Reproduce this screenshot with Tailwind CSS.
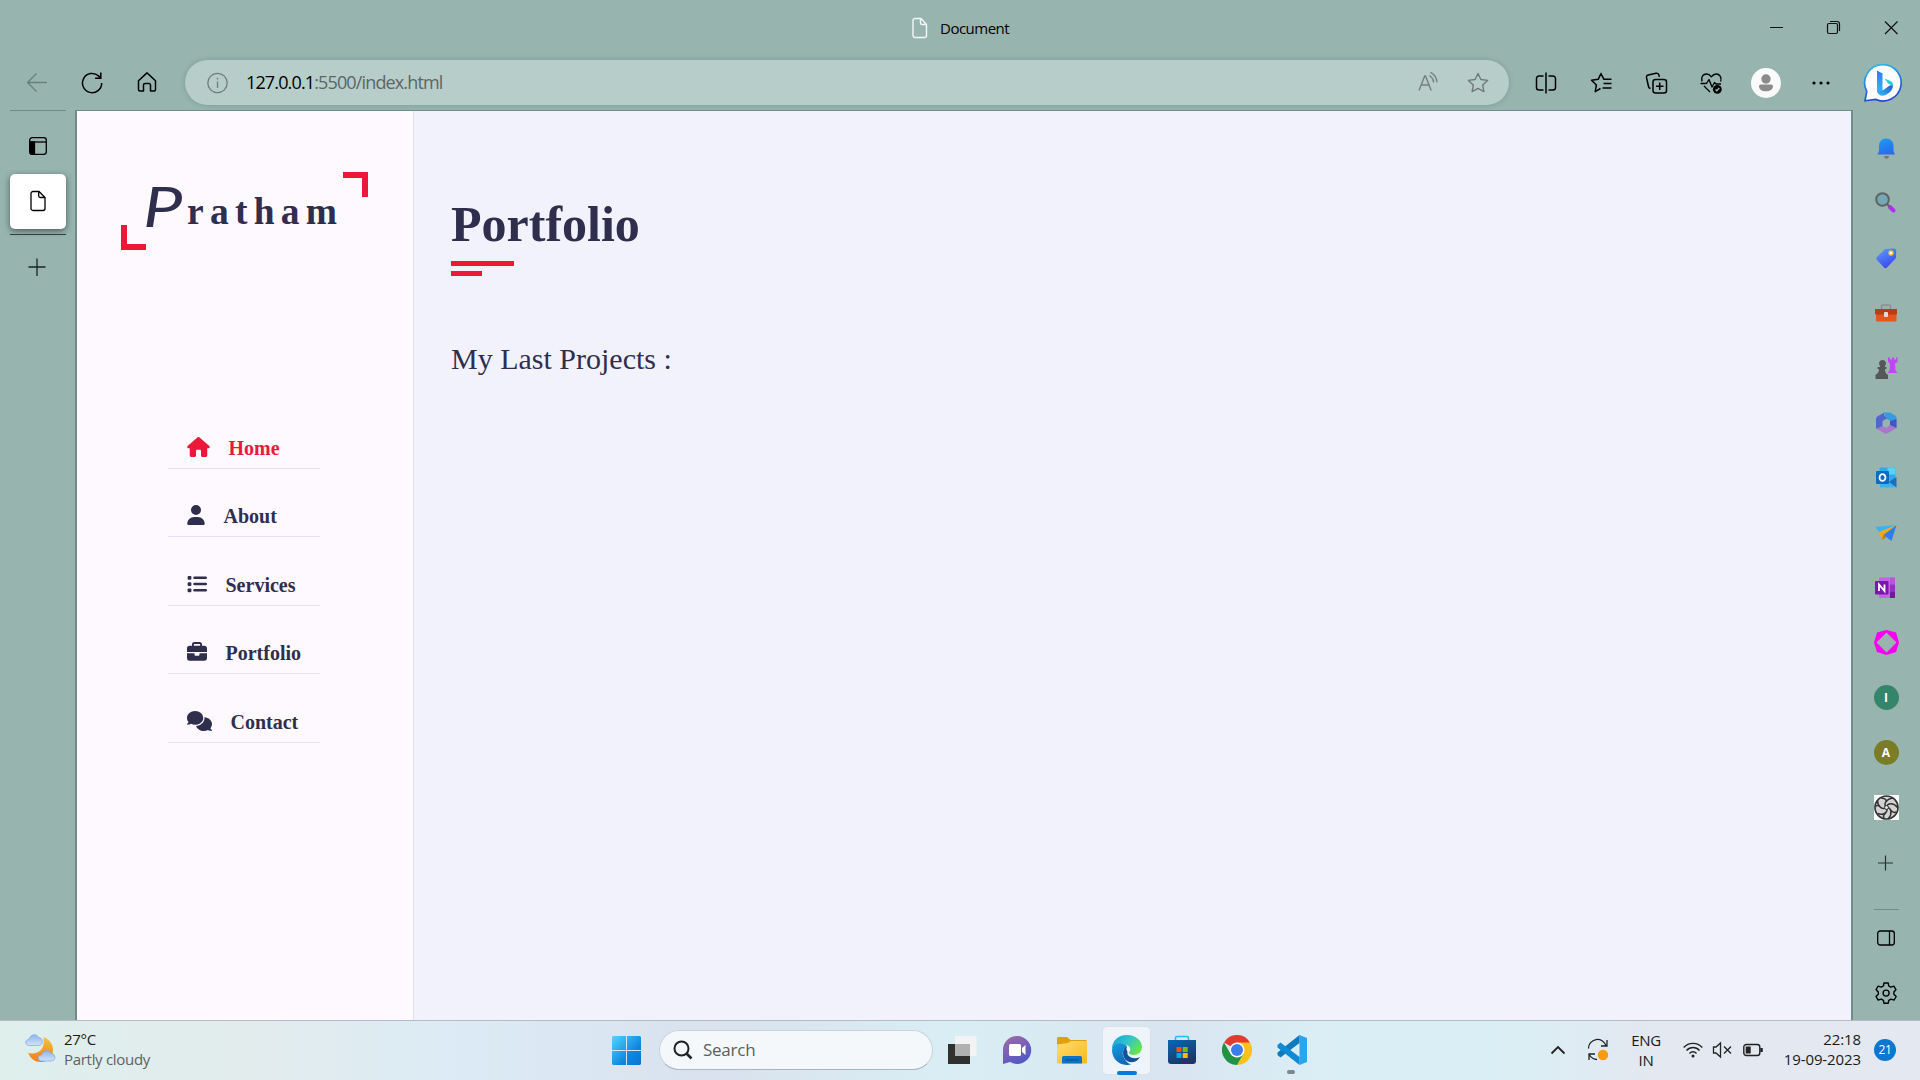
<!DOCTYPE html>
<html lang="en">
<head>
<meta charset="utf-8">
<title>Document</title>
<script src="https://cdn.jsdelivr.net/npm/@tailwindcss/browser@4"></script>
</head>
<body class="w-[1920px] h-[1080px] overflow-hidden flex flex-col bg-[#97b4af] font-['Open_Sans',sans-serif] text-black">

<!-- Title bar -->
<header class="h-[60px] shrink-0 flex items-start">
  <div class="w-[912px] shrink-0"></div>
  <div class="flex items-center w-[834px] h-[56px] shrink-0 pb-1">
    <svg class="w-[16px] h-[22px] mt-1" viewBox="0 0 16 22" fill="none" stroke="#f3f7f6" stroke-width="1.4"><path d="M3 1.500h6l5.500 6V18.500a2 2 0 0 1-2 2H3a2 2 0 0 1-2-2V3.500a2 2 0 0 1 2-2zM8.500 1.500v4.500a1.500 1.500 0 0 0 1.500 1.500h4.500"/></svg>
    <span class="ml-[12px] mt-[4px] text-[15px] leading-5 tracking-[-0.5px]">Document</span>
  </div>
  <svg class="w-[174px] h-[56px]" viewBox="1746 0 174 56" fill="none" stroke="#111" stroke-width="1.2"><path d="M1770 27.500h13M1885 21.500l12.500 12.500M1897.500 21.500l-12.500 12.500"/><rect x="1827.500" y="23.500" width="10" height="10" rx="1.500"/><path d="M1830 21.500h7a2.500 2.500 0 0 1 2.500 2.500v7"/></svg>
</header>

<!-- Toolbar -->
<nav class="h-[45px] shrink-0 flex items-center pl-[9px]">
  <div class="w-[55px] grid place-items-center"><svg class="w-6 h-6" viewBox="0 0 24 24" fill="none" stroke="#6a7f7b" stroke-width="1.300"><path d="M22 11.500H2.500M11.500 2.500l-9 9 9 9"/></svg></div>
  <div class="w-[55px] grid place-items-center"><svg class="w-6 h-6" viewBox="0 0 24 24" fill="none" stroke="#000" stroke-width="1.500"><path d="M21.700 12A9.600 9.600 0 1 1 18.500 4.900l2 2M20.800 1.500v5.700h-5.700"/></svg></div>
  <div class="w-[55px] grid place-items-center"><svg class="w-6 h-6" viewBox="0 0 24 24" fill="none" stroke="#000" stroke-width="1.500" stroke-linejoin="round"><path d="M3.500 9.700 12 1.900l8.500 7.800v8.800a1.500 1.500 0 0 1-1.500 1.500h-3.500V14a1.500 1.500 0 0 0-1.500-1.500h-4a1.500 1.500 0 0 0-1.500 1.500v6H5a1.500 1.500 0 0 1-1.500-1.500z"/></svg></div>
  <div class="ml-[11px] w-[1324px] h-[45px] rounded-full bg-[#b7cdc9] shadow-[0_0_5px_rgba(60,90,85,0.3)] flex items-center">
    <svg class="ml-[20px] w-6 h-6" viewBox="0 0 24 24" fill="none" stroke="#707d7b" stroke-width="1.300"><circle cx="12.500" cy="12" r="9.700"/><path d="M12.500 10.500v6.500"/><circle cx="12.500" cy="7.700" r=".6" fill="#707d7b" stroke-width=".5"/></svg>
    <span class="ml-[17px] text-[18px] tracking-[-0.86px] text-[#5c6664] whitespace-nowrap"><span class="text-black">127.0.0.1</span>:5500/index.html</span>
    <svg class="ml-auto w-6 h-6" viewBox="0 0 24 24" fill="none" stroke="#757f7d" stroke-width="1.400"><path d="M3 19.500 8.700 5h.8l5.700 14.500M5.300 14h7.600M13.500 4.500c2.200 1.500 3.800 3.700 4.200 6.800M14.500 1.300c3.800 1.800 6 5 6.500 10"/></svg>
    <svg class="ml-[26px] mr-[19px] w-6 h-6" viewBox="0 0 24 24" fill="none" stroke="#6f7a78" stroke-width="1.400" stroke-linejoin="round"><path d="m12 2.500 2.900 6 6.700.9-4.900 4.600 1.200 6.600-5.900-3.200-5.900 3.200 1.200-6.600L2.400 9.400l6.700-.9z"/></svg>
  </div>
  <div class="ml-[9px] flex">
    <div class="w-[55px] grid place-items-center"><svg class="w-6 h-6" viewBox="0 0 24 24" fill="none" stroke="#000" stroke-width="1.500"><path d="M12 1.500v21M9.500 5H5a2.500 2.500 0 0 0-2.500 2.500v9A2.500 2.500 0 0 0 5 19h4.500M14.500 5H19a2.500 2.500 0 0 1 2.500 2.500v9A2.500 2.500 0 0 1 19 19h-4.500"/></svg></div>
    <div class="w-[55px] grid place-items-center"><svg class="w-6 h-6" viewBox="0 0 24 24" fill="none" stroke="#000" stroke-width="1.500" stroke-linejoin="round"><path d="M11.500 17.500 6.200 20.700 7.400 14 2.500 9.300l6.700-1L12 2.500l2.900 5.800h7.600M14.500 12.500h8M13.500 17h9"/></svg></div>
    <div class="w-[55px] grid place-items-center"><svg class="w-6 h-6" viewBox="0 0 24 24" fill="none" stroke="#000" stroke-width="1.500"><rect x="9" y="8.500" width="13.500" height="13.500" rx="2.500"/><path d="M15.700 11.500v7.500M12 15.200h7.500M6.500 17.500a2.500 2.500 0 0 1-2-2L2.500 6.500a2 2 0 0 1 1.700-2.400L12 2.300a2.500 2.500 0 0 1 3 2l.3 1.500"/></svg></div>
    <div class="w-[55px] grid place-items-center"><svg class="w-6 h-6" viewBox="0 0 24 24" fill="none" stroke="#000" stroke-width="1.400" stroke-linejoin="round"><path d="M3 10.500C1.500 5.500 4.500 3 7.500 3c2 0 3.700 1.200 4.800 2.800C13.500 4.200 15.200 3 17.200 3c3.300 0 5.800 3 4.500 7.500M1.500 12.500h6l2.500-4 3 7.500 2.500-4.500 1.500 1.500h5M5 15l6 6"/><circle cx="18.300" cy="18.300" r="4.400" fill="#000" stroke="none"/><path d="m16.500 18.500 1.300 1.300 2.500-2.700" stroke="#97b4af"/></svg></div>
    <div class="w-[55px] grid place-items-center"><svg class="w-[30px] h-[30px]" viewBox="0 0 30 30"><circle cx="15" cy="15" r="15" fill="#fafafa"/><g fill="#8b8b8b"><circle cx="15" cy="11" r="4.700"/><path d="M9.800 16.500h10.400a1.800 1.800 0 0 1 1.800 1.800c0 3-3 5-7 5s-7-2-7-5a1.800 1.800 0 0 1 1.800-1.800z"/></g></svg></div>
    <div class="w-[55px] grid place-items-center"><svg class="w-6 h-6" viewBox="0 0 24 24"><circle cx="5" cy="12" r="1.600"/><circle cx="12" cy="12" r="1.600"/><circle cx="19" cy="12" r="1.600"/></svg></div>
  </div>
  <svg class="ml-[14px] w-[42px] h-[42px]" viewBox="0 0 42 42"><defs><linearGradient id="bg1" x1="0" y1="0" x2=".3" y2="1"><stop offset="0" stop-color="#27c4f0"/><stop offset="1" stop-color="#2148d8"/></linearGradient><linearGradient id="bg2" x1="0" y1="0" x2="0" y2="1"><stop offset="0" stop-color="#2a7cf5"/><stop offset="1" stop-color="#35bdf8"/></linearGradient><linearGradient id="bg3" x1="0" y1="1" x2="1" y2="0"><stop offset="0" stop-color="#34c1ef"/><stop offset="1" stop-color="#2454dc"/></linearGradient></defs><path d="M21 2.600a18.200 18.200 0 1 1-7.500 34.800L3 38.800l1.800-9.500A18.200 18.200 0 0 1 21 2.600z" fill="#fff" stroke="url(#bg1)" stroke-width="1.700"/><path d="m15 8.500 5.500 3v18.500L17 32.500l-2-2.500z" fill="url(#bg2)"/><path d="m15.500 30 6-2 6-4.500 3.500-.5c0 4-2 6.500-5 8.500-4.500 3-8.500 3.500-10.500-1.500z" fill="url(#bg3)"/><path d="m22.500 16.500 6 2.500c2 1 2.800 2.500 2.500 5l-5-2.500z" fill="#27cddc"/></svg>
</nav>

<!-- Browser body -->
<div class="h-[915px] shrink-0 flex">
  <!-- Vertical tabs -->
  <aside class="w-[75px] pt-[5px] pl-[10px] shrink-0">
    <div class="w-[56px] h-px bg-[#728d88]"></div>
    <div class="w-[56px] h-[63px] pt-[6px] pr-[1px] grid place-items-center"><svg class="w-[18px] h-[18px]" viewBox="0 0 18 18" fill="none" stroke="#000" stroke-width="1.300"><rect x=".7" y=".7" width="16.600" height="16.600" rx="2.500"/><path d="M1 5h16" /><path d="M1 5h4.500v12.300H3A2 2 0 0 1 1 15z" fill="#000"/></svg></div>
    <div class="w-[56px] h-[55px] rounded-[5px] bg-white shadow-[0_2px_6px_rgba(0,0,0,0.5)] grid place-items-center pb-[1px]"><svg class="w-[16px] h-[22px]" viewBox="0 0 16 22" fill="none" stroke="#000" stroke-width="1.300"><path d="M3 1.500h6l6 6V18.500a2 2 0 0 1-2 2H3a2 2 0 0 1-2-2V3.500a2 2 0 0 1 2-2zM8.700 1.500V6a1.500 1.500 0 0 0 1.500 1.500H15"/></svg></div>
    <div class="mt-[5px] w-[56px] h-px bg-[#33413e]"></div>
    <svg class="mt-[22px] ml-[17px] w-[20px] h-[20px]" viewBox="0 0 20 20" stroke="#1b2422" stroke-width="1.300"><path d="M10 1.500v17.500M1.500 10h17"/></svg>
  </aside>

  <!-- Page -->
  <div class="mt-[5px] w-[1778px] shrink-0 border-t border-l-2 border-r-2 border-[#728d88] flex">
    <aside class="w-[337px] shrink-0 bg-[#fdf9ff] border-r border-[#e0dff3] flex flex-col">
      <div class="relative ml-[44px] mt-[61px] w-[247px] h-[78px]">
        <div class="absolute right-0 top-0 w-[25px] h-[25px] border-t-6 border-r-6 border-[#ec1839]"></div>
        <div class="absolute left-0 bottom-0 w-[25px] h-[25px] border-b-6 border-l-6 border-[#ec1839]"></div>
        <a class="absolute left-[22px] top-[3px] whitespace-nowrap leading-[56px] font-bold text-[#302e4d] text-[37.5px] tracking-[6.25px] font-['Liberation_Serif',serif]"><span class="inline-block w-[44px] origin-left translate-y-[3px] scale-x-125 font-['Lato',cursive] font-normal italic text-[56px] tracking-normal">P</span>ratham</a>
      </div>
      <ul class="ml-[91px] mt-[150px] w-[152px] font-['Liberation_Serif',serif] font-bold text-[20px] text-[#302e4d]">
        <li class="h-[68.500px] border-b border-[#e8dfff] flex items-center pt-[26px] pl-[18.500px] text-[#ec1839]"><svg class="w-[23px] h-5" viewBox="0 0 576 512" fill="currentColor"><path d="M575.800 255.500c0 18-15 32.100-32 32.100h-32l.7 160.200c0 2.700-.2 5.400-.5 8.100V472c0 22.100-17.900 40-40 40H392c-22.100 0-40-17.900-40-40V360c0-17.700-14.300-32-32-32h-64c-17.700 0-32 14.300-32 32v112c0 22.100-17.900 40-40 40h-80c-22.100 0-40-17.900-40-40V287.600H32c-18 0-32-14-32-32.100 0-9 3-17 10-24L266.400 8c7-7 15-8 22-8s15 2 21 7l255.400 224.500c8 7 12 15 11 24z"/></svg><span class="ml-[19px] mt-[2px]">Home</span></li>
        <li class="h-[68.500px] border-b border-[#e8dfff] flex items-center pt-[26px] pl-[18.500px]"><svg class="w-[18px] h-5" viewBox="0 0 448 512" fill="currentColor"><path d="M224 256a128 128 0 1 0 0-256 128 128 0 1 0 0 256zm-45.700 48C79.800 304 0 383.800 0 482.300 0 498.700 13.300 512 29.700 512h388.600c16.400 0 29.700-13.300 29.700-29.700C448 383.800 368.200 304 269.700 304z"/></svg><span class="ml-[19px] mt-[2px]">About</span></li>
        <li class="h-[68.500px] border-b border-[#e8dfff] flex items-center pt-[26px] pl-[18.500px]"><svg class="w-5 h-5" viewBox="0 0 512 512" fill="currentColor"><rect x="16" y="48" width="96" height="96" rx="24"/><rect x="16" y="208" width="96" height="96" rx="24"/><rect x="16" y="368" width="96" height="96" rx="24"/><rect x="160" y="64" width="352" height="64" rx="32"/><rect x="160" y="224" width="352" height="64" rx="32"/><rect x="160" y="384" width="352" height="64" rx="32"/></svg><span class="ml-[19px] mt-[2px]">Services</span></li>
        <li class="h-[68.500px] border-b border-[#e8dfff] flex items-center pt-[26px] pl-[18.500px]"><svg class="w-5 h-5" viewBox="0 0 512 512" fill="currentColor"><path d="M184 48h144c4.400 0 8 3.600 8 8v40H176V56c0-4.400 3.600-8 8-8zm-56 8v40H64c-35.300 0-64 28.700-64 64v96h512v-96c0-35.300-28.700-64-64-64h-64V56c0-30.900-25.100-56-56-56H184c-30.900 0-56 25.100-56 56zm384 232H320v32c0 17.700-14.300 32-32 32h-64c-17.700 0-32-14.300-32-32v-32H0v128c0 35.300 28.700 64 64 64h384c35.300 0 64-28.700 64-64z"/></svg><span class="ml-[19px] mt-[2px]">Portfolio</span></li>
        <li class="h-[68.500px] border-b border-[#e8dfff] flex items-center pt-[26px] pl-[18.500px]"><svg class="w-[25px] h-5" viewBox="0 0 640 512" fill="currentColor"><path d="M208 352c114.900 0 208-78.800 208-176S322.900 0 208 0 0 78.800 0 176c0 38.600 14.700 74.300 39.600 103.400-3.500 9.400-8.700 17.700-14.200 24.700-4.800 6.200-9.700 11-13.300 14.300C5 323-2 330 0 340c3 8 9 12 16 12 21.900 0 43.800-5.600 62.100-12.500 9.200-3.500 17.800-7.400 25.300-11.400C134.100 343.300 169.800 352 208 352zM448 176c0 112.300-99.100 196.900-216.500 207C255.800 457.400 336.400 512 432 512c38.200 0 73.900-8.700 104.700-23.900 7.500 4 16 7.900 25.200 11.400 18.300 6.900 40.300 12.500 62.100 12.500 7 0 13-4 16-12 2-9-6-16-12.200-21.700-3.600-3.400-8.500-8.200-13.300-14.300-5.400-7-10.700-15.400-14.200-24.700 25-29 39.600-64.700 39.600-103.400 0-92.800-84.900-168.900-192.600-175.500.4 5.100.6 10.300.6 15.500z"/></svg><span class="ml-[19px] mt-[2px]">Contact</span></li>
      </ul>
    </aside>
    <main class="flex-1 bg-[#f2f2fc] pl-[37px] font-['Liberation_Serif',serif] text-[#302e4d]">
      <h1 class="mt-[84px] text-[50px] leading-[58px] font-bold">Portfolio</h1>
      <div class="mt-[8px] w-[63px] h-[5px] bg-[#ec1839]"></div>
      <div class="mt-[5px] w-[31px] h-[5px] bg-[#ec1839]"></div>
      <h2 class="mt-[65px] text-[30px] leading-[36px]">My Last Projects :</h2>
    </main>
  </div>

  <!-- Edge sidebar -->
  <aside class="w-[67px] pr-[1px] pt-[15px] flex flex-col items-center">
    <div class="h-[55px] grid place-items-center"><svg class="w-6 h-6" viewBox="0 0 24 24"><defs><linearGradient id="s1" x1="0" y1="0" x2=".4" y2="1"><stop offset="0" stop-color="#1a9ff0"/><stop offset="1" stop-color="#2a6cf0"/></linearGradient></defs><path d="M10 20h5l-1 2.500h-3z" fill="#777"/><path d="M12 2.500c4.500 0 7.500 3 7.500 7.500v5l1.500 3.500H3.500L5 15v-5c0-4.500 3-7.500 7-7.500z" fill="url(#s1)"/></svg></div>
    <div class="h-[55px] grid place-items-center"><svg class="w-6 h-6" viewBox="0 0 24 24"><path d="m16 16 3.500 3.500" stroke="#b22df2" stroke-width="4" stroke-linecap="round"/><path d="m13 13 2.500 2.500" stroke="#5f6262" stroke-width="2"/><circle cx="8.500" cy="8.500" r="6.300" fill="#73a8b4" stroke="#5f6262" stroke-width="2"/></svg></div>
    <div class="h-[55px] grid place-items-center"><svg class="w-6 h-6" viewBox="0 0 24 24"><defs><linearGradient id="s2" x1="0" y1="0" x2=".5" y2="1"><stop offset="0" stop-color="#5ba1fb"/><stop offset="1" stop-color="#3d49ee"/></linearGradient></defs><path d="m11 3 9-.5c1.500 0 2.200.8 2.200 2L22 12 13 21.500c-1 1-2 1-3 0l-7-7.500c-1-1-1-2 0-3z" fill="url(#s2)"/><circle cx="17" cy="7" r="2" fill="#fff" stroke="#f8ca28" stroke-width="1.300"/></svg></div>
    <div class="h-[55px] grid place-items-center"><svg class="w-6 h-6" viewBox="0 0 24 24"><path d="M7.500 8V5.500c0-1 .5-1.500 1.500-1.500h6c1 0 1.500.5 1.500 1.500V8" fill="none" stroke="#8b8d8c" stroke-width="1.500"/><rect x="2" y="8" width="20.500" height="12.500" rx="1.200" fill="#e3571f"/><path d="M1 8h22v4.500a1 1 0 0 1-1 1H2a1 1 0 0 1-1-1z" fill="#bd3d12"/><rect x="10" y="11" width="4" height="5" rx="1" fill="#e0dedc"/></svg></div>
    <div class="h-[55px] grid place-items-center"><svg class="w-6 h-6" viewBox="0 0 24 24"><path d="M14 1.500h2v2h2v-2h2v2h2v-2h1.500V6L21 7.500l.5 7 2 2.500H13.500l2-2.500.5-7L14 6z" fill="#bd48f0"/><path d="M8.500 4a3.500 3.500 0 0 1 2.500 6v1h1.500v2H11c0 3 .5 4.500 3 6v4H1.500v-4c2.500-1.500 3.500-3 3.500-6H3.500v-2H6V10a3.500 3.500 0 0 1 2.500-6z" fill="#555857"/></svg></div>
    <div class="h-[55px] grid place-items-center"><svg class="w-6 h-6" viewBox="0 0 24 24"><path d="M10 1.500h6l5 3c1 .7 1.500 1.500 1.500 3V16L16 12.500V9.800L12 7.500z" fill="#379be0"/><path d="M10.500 1.500 4 5c-1.500 1-2 2-2 3.500V16c0 1 .5 2 1.500 2.500L8.500 17V10l4.500-2.500L10 4z" fill="#5065cd"/><path d="M2.500 17.500 8.500 15l4 2 4-3.500 6 1.500c0 1.500-.5 2.200-1.500 3l-7 4c-1.500 1-2.500 1-4 0z" fill="#a977cb"/><path d="M16 10v4l6.500 3V8z" fill="#4456c5"/></svg></div>
    <div class="h-[55px] grid place-items-center"><svg class="w-6 h-6" viewBox="0 0 24 24"><rect x="5.500" y="1.500" width="16" height="13" rx="1" fill="#2fa8ec"/><path d="M13.500 1.500h8v7h-8z" fill="#55d3fb"/><path d="m22.500 11-8 5 8 5.500z" fill="#1670c4"/><path d="M6 13.500 14.500 16l7.500 5.500H7a1 1 0 0 1-1-1z" fill="#38b5f0"/><rect x="2" y="5" width="13" height="13" rx="1" fill="#0b6ac3"/><ellipse cx="8.500" cy="11.500" rx="3" ry="3.400" fill="none" stroke="#fff" stroke-width="1.800"/></svg></div>
    <div class="h-[55px] grid place-items-center"><svg class="w-6 h-6" viewBox="0 0 24 24"><path d="M1.500 6 22.500 4 5 11z" fill="#35b5ed"/><path d="M5 11 22.500 4 8 19z" fill="#f4a71b"/><path d="M22.500 4 17.500 20 9.500 14z" fill="#2e7df1"/><path d="M9.500 14 8 19l4-3z" fill="#b87811"/></svg></div>
    <div class="h-[55px] grid place-items-center"><svg class="w-6 h-6" viewBox="0 0 24 24"><rect x="5" y="1.500" width="16" height="20.500" rx="1" fill="#ca61e9"/><path d="M16 1.500h5v7h-5z" fill="#b456de"/><path d="M16 8.500h5v7h-5z" fill="#9530c5"/><path d="M16 15.500h5V22h-5z" fill="#7317a5"/><rect x="1" y="5" width="13.500" height="13.500" rx="1" fill="#7719aa"/><path d="M5 15V8.500l5.500 6.500V8.500" fill="none" stroke="#fff" stroke-width="1.800"/></svg></div>
    <div class="h-[55px] grid place-items-center"><svg class="w-[25px] h-[25px]" viewBox="0 0 25 25"><path fill="#f500f0" fill-rule="evenodd" d="M12.500 0 22 2.500 25 12.500 22 22l-9.500 3L3 22 0 12.500 3 2.500zM12.500 2.500l-10 10 10 10 10-10z"/></svg></div>
    <div class="h-[55px] grid place-items-center"><div class="size-[25px] rounded-full bg-[#35856a] text-white text-[12px] font-bold grid place-items-center">I</div></div>
    <div class="h-[55px] grid place-items-center"><div class="size-[25px] rounded-full bg-[#7a7d26] text-white text-[12px] font-bold grid place-items-center">A</div></div>
    <div class="h-[55px] grid place-items-center"><svg class="w-[25px] h-[25px] bg-white" viewBox="0 0 25 25" fill="none" stroke="#333"><circle cx="12.500" cy="12.500" r="11.500" fill="#d3d3d3" stroke-width="1.700"/><path stroke-width="1.500" d="M12.500 12.500C9 9 12 4 19 3M12.500 12.500c1-5 7-5 11 0M12.500 12.500c5 0 6 6 2 11M12.500 12.500c2 5-3 8-9 6M12.500 12.500c-4 3-9-1-9-7M7 3c2 0 5 1 6 4M22 17c-2 1-4 0-5-2M10 23c-1-2 0-4 2-5M2 11c2-1 4 0 5 2"/><circle cx="12.500" cy="12.500" r="2" fill="#ddd"/></svg></div>
    <div class="h-[55px] grid place-items-center"><svg class="w-4 h-4" viewBox="0 0 16 16" stroke="#26322f" stroke-width="1.200"><path d="M7.500.5v15M0 8h15"/></svg></div>
    <div class="mt-[19px] w-[25px] h-px bg-[#728d88] shrink-0"></div>
    <div class="h-[55px] grid place-items-center"><svg class="w-[18px] h-[16px]" viewBox="0 0 18 16" fill="none" stroke="#000" stroke-width="1.300"><rect x=".7" y="1" width="16.600" height="14" rx="2.500"/><path d="M12.500 1v14"/></svg></div>
    <div class="h-[55px] grid place-items-center"><svg class="w-6 h-6" viewBox="0 0 24 24" fill="none" stroke="#000" stroke-width="1.400" stroke-linejoin="round"><path d="m10 2-.6 3-2.200 1.200-3-1L2 8.600 4.300 11v2.300L2 15.500l2.200 3.600 3-1 2.200 1.200.6 3h4.200l.6-3 2.200-1.200 3 1 2.200-3.600-2.300-2.200V11L22 8.600l-2.200-3.400-3 1L14.800 5l-.6-3z"/><circle cx="12.100" cy="12.100" r="3"/></svg></div>
  </aside>
</div>

<!-- Taskbar -->
<footer class="h-[60px] shrink-0 border-t border-[#b4bac8] flex items-center bg-[linear-gradient(90deg,#deefec_0px,#e2eced_250px,#dcebf5_450px,#d9e2ee_720px,#d9eef4_950px,#d9e5f1_1170px,#daeff5_1340px,#daeff5_1500px,#e3e8f1_1650px)] text-[#1a1a1a]">
  <div class="w-[599px] h-full shrink-0 flex items-center pl-[24px]">
    <svg class="w-[32px] h-[32px] mt-[-4px]" viewBox="0 0 32 32"><defs><linearGradient id="w1" x1="0" y1="0" x2="0" y2="1"><stop offset="0" stop-color="#f4c23c"/><stop offset="1" stop-color="#ef7e20"/></linearGradient><linearGradient id="w2" x1="0" y1="0" x2="0" y2="1"><stop offset="0" stop-color="#8db5ee"/><stop offset="1" stop-color="#d2e2fa"/></linearGradient></defs><path d="M19.500 4c6 2.500 9.500 7 9.500 13 0 7-5 12-12 12-6 0-10-3-13-9 9 2 15-3 15.500-9 .2-2.500.5-4.500 0-7z" fill="url(#w1)"/><g fill="url(#w2)" stroke="#7ea5e3" stroke-width=".7"><path d="M5.500 12.500c-5 0-5-6-.5-6 1.500-6 8-6 9.500-2 5 0 5.500 8 0 8z"/><path d="M18 28c-5 0-5-6-.5-6 1.500-5.500 8-5.500 9.500-1.500 5 0 5.500 7.500 0 7.500z"/></g></svg>
    <div class="ml-[8px] mt-[-4px] text-[15px] leading-[20px] tracking-[-0.3px] whitespace-nowrap"><div>27°C</div><div class="text-[#5b6364]">Partly cloudy</div></div>
  </div>
  <div class="w-[55px] grid place-items-center shrink-0"><svg class="w-[29px] h-[29px]" viewBox="0 0 29 29"><defs><linearGradient id="win" x1="0" y1="0" x2="1" y2="1"><stop offset="0" stop-color="#51d6fd"/><stop offset=".65" stop-color="#0c86de"/><stop offset="1" stop-color="#0876d3"/></linearGradient></defs><path fill="url(#win)" d="M1 0h13v14H0V1zM15 0h13l1 1v13H15zM0 15h14v14H1l-1-1zM15 15h14v13l-1 1H15z"/></svg></div>
  <div class="ml-[5px] mt-[-1px] w-[274px] h-[40px] shrink-0 rounded-full bg-[#f4f8fb] border border-[#c9d3df] border-b-[#abb5c2] flex items-center">
    <svg class="ml-[13px] w-[20px] h-[20px]" viewBox="0 0 20 20" fill="none" stroke="#222" stroke-width="2"><circle cx="8.500" cy="8.500" r="7"/><path d="m13.500 13.500 5 5" stroke-width="2.700"/></svg>
    <span class="ml-[10px] text-[17px] tracking-[-0.25px] text-[#5b5f63]">Search</span>
  </div>
  <div class="ml-[1px] mt-[-1px] flex items-center shrink-0">
    <div class="w-[55px] grid place-items-center"><svg class="w-[30px] h-[30px]" viewBox="0 0 30 30"><path d="M1 9h22v20H1z" fill="#30302f"/><path d="M8 1h21.500v20H8z" fill="#f3f3f3"/><path d="M8 9h15v12H8z" fill="#b1b1b1"/></svg></div>
    <div class="w-[55px] grid place-items-center"><svg class="w-[30px] h-[30px]" viewBox="0 0 30 30"><defs><linearGradient id="ch" x1="0" y1="0" x2=".5" y2="1"><stop offset="0" stop-color="#a36aa5"/><stop offset="1" stop-color="#5359c7"/></linearGradient></defs><path d="M15 1a14 14 0 1 1-7 26L1 29V15A14 14 0 0 1 15 1z" fill="url(#ch)"/><rect x="7" y="9" width="12" height="12" rx="1.500" fill="#fff"/><path d="m20 13 3.500-3v10L20 17z" fill="#fff"/></svg></div>
    <div class="w-[55px] grid place-items-center"><svg class="w-[30px] h-[30px]" viewBox="0 0 30 30"><defs><linearGradient id="fo" x1="0" y1="0" x2="1" y2="1"><stop offset="0" stop-color="#ffdc70"/><stop offset="1" stop-color="#f9b81f"/></linearGradient></defs><path d="M0 3.500C0 2.500.5 2 1.500 2H10l3.500 3H29l1 1v4H0z" fill="#dfa008"/><path d="M0 9.500l11-1.500 3-2h16v22.500H0z" fill="url(#fo)"/><path d="M5 28.500V23c0-1.500 1-2 2-2h16c1 0 2 .5 2 2v5.500z" fill="#0b72c6"/><path d="M8.500 25h13" stroke="#064a8b"/></svg></div>
    <div class="w-[55px] grid place-items-center">
      <div class="relative w-[49px] h-[49px] rounded-[5px] bg-[#eff4fa] border border-[#d9e2eb] grid place-items-center">
        <svg class="w-[30px] h-[30px]" viewBox="0 0 30 30"><defs><linearGradient id="e1" x1="0" y1="0" x2="1" y2=".6"><stop offset="0" stop-color="#1c9bd2"/><stop offset=".5" stop-color="#32c2cf"/><stop offset="1" stop-color="#67e44c"/></linearGradient><linearGradient id="e2" x1="0" y1="0" x2=".4" y2="1"><stop offset="0" stop-color="#179edf"/><stop offset="1" stop-color="#0f69ba"/></linearGradient></defs><path d="M0 14C0 6 6 0 15 0s15 6 15 12c0 5-4 8-8 8-3 0-6-1-5-3 3-2 1-7-4-7C7 9 2 11 0 14z" fill="url(#e1)"/><path d="M0 15c1-6 7-8 11-6 3 1 4 2 4 3-3 1-5 4-4 8s4 8 8 9.500C9 32 0 25 0 15z" fill="url(#e2)"/><path d="M15 11.500c-4 2-5 6-3 11s9 6 13 3c1-.7 2-2 3-3.500-6 3-14 0-12.500-5.500-1-1-1.500-3-.5-5z" fill="#11529a"/></svg>
        <div class="absolute left-[14px] bottom-[-1px] w-[20px] h-[4px] rounded-full bg-[#0b7ad6]"></div>
      </div>
    </div>
    <div class="w-[55px] grid place-items-center"><svg class="w-[30px] h-[30px]" viewBox="0 0 30 30"><defs><linearGradient id="st" x1="0" y1="0" x2=".5" y2="1"><stop offset="0" stop-color="#0868b9"/><stop offset="1" stop-color="#1f3563"/></linearGradient></defs><path d="M8.500 6V3c0-1 .5-1.500 1.500-1.500h10c1 0 1.500.5 1.500 1.500v3" fill="none" stroke="#27bdee" stroke-width="1.600"/><path d="M1 5h28v21c0 2-1 3-3 3H4c-2 0-3-1-3-3z" fill="url(#st)"/><path d="M9.500 12h5v5h-5z" fill="#f25022"/><path d="M15.700 12h5v5h-5z" fill="#7fba00"/><path d="M9.500 18h5v5h-5z" fill="#00a4ef"/><path d="M15.700 18h5v5h-5z" fill="#ffb900"/></svg></div>
    <div class="w-[55px] grid place-items-center"><svg class="w-[30px] h-[30px]" viewBox="0 0 30 30"><path d="M15 15 2 7.500A15 15 0 0 1 28 7.500z" fill="#e33b2e"/><path d="M15 7.500h13A15 15 0 0 1 15 30l6.500-11.300z" fill="#fcc21b"/><path d="M2 7.500A15 15 0 0 0 15 30l6.500-11.300L15 15l-6.500 3.700z" fill="#229342"/><circle cx="15" cy="15" r="7.500" fill="#fff"/><circle cx="15" cy="15" r="6" fill="#3b7ded"/></svg></div>
    <div class="w-[55px] relative grid place-items-center"><svg class="w-[30px] h-[30px]" viewBox="0 0 30 30"><path d="M22.500 0 30 3v24l-7.500 3z" fill="#29a5ed"/><path d="M22.500 0v8L3.500 22.500.5 20v-2.500z" fill="#1179bd"/><path d="m.5 12.500 0-2.500 3-2.500L22.500 22v8z" fill="#0f8ad4"/></svg><div class="absolute left-[23px] top-[35px] w-[8px] h-[4px] rounded-full bg-[#7c868c]"></div></div>
  </div>
  <!-- Tray -->
  <svg class="ml-[231px] mt-[-1px] w-[16px] h-[10px] shrink-0" viewBox="0 0 16 10" fill="none" stroke="#222" stroke-width="1.800"><path d="m1.500 8.500 6.500-6.500 6.500 6.500"/></svg>
  <svg class="ml-[20px] mt-[-1px] w-[24px] h-[24px] shrink-0" viewBox="0 0 24 24" fill="none" stroke="#222" stroke-width="1.300"><path d="M2.500 10.500a9 9 0 0 1 17.500-3M21 2v6h-6M11 21.500A9 9 0 0 1 3.500 17M3 22v-6h6"/><circle cx="17" cy="17" r="5.200" fill="#fe9c07" stroke="none"/></svg>
  <div class="w-[72px] mt-[-2px] shrink-0 text-center text-[15px] leading-[20px] tracking-[-0.3px]">ENG<br>IN</div>
  <svg class="ml-[1px] mt-[-1px] w-[20px] h-[18px] shrink-0" viewBox="0 0 20 18" fill="none" stroke="#222" stroke-width="1.400"><path d="M.7 6.500c5-5.500 13.500-5.500 18.600 0M3.500 9.500c3.500-4 9.500-4 13 0M6.500 12.500c2-2.300 5-2.300 7 0"/><circle cx="10" cy="15" r="1.500" fill="#222" stroke="none"/></svg>
  <svg class="ml-[9px] mt-[-1px] w-[20px] h-[18px] shrink-0" viewBox="0 0 20 18" fill="none" stroke="#222" stroke-width="1.300"><path d="M1.500 6H4l4.500-4v14L4 12H1.500zM12 5.500l7 7M19 5.500l-7 7"/></svg>
  <svg class="ml-[11px] mt-[-1px] w-[20px] h-[14px] shrink-0" viewBox="0 0 20 14" fill="none" stroke="#222" stroke-width="1.400"><rect x=".8" y="1.500" width="16" height="11" rx="2.500"/><rect x="2.700" y="3.500" width="5" height="7" fill="#222" stroke="none"/><path d="M18.500 5v4" stroke-width="2.500"/></svg>
  <div class="w-[98px] mt-[-4px] shrink-0 text-right text-[15px] leading-[20px] tracking-[-0.1px]">22:18<br>19-09-2023</div>
  <div class="ml-[13px] mt-[-1px] w-[22px] h-[22px] rounded-full bg-[#0a78d3] text-white text-[12px] grid place-items-center shrink-0 tracking-[-0.3px]">21</div>
</footer>
</body>
</html>
